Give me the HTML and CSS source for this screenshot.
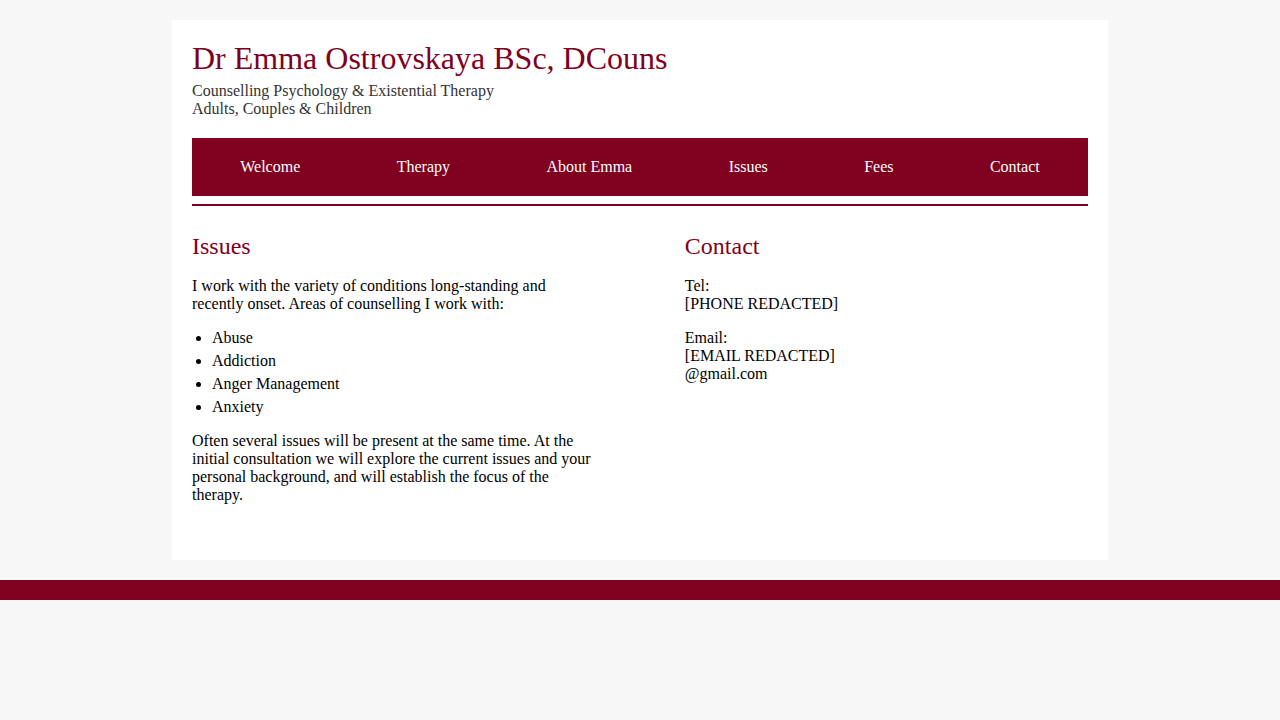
FILE: index.html
```html
<!DOCTYPE html>
<html lang="en">
<head>
<meta charset="utf-8">
<title>Dr Emma Ostrovskaya - Issues</title>
<link rel="stylesheet" href="styles.css">
</head>
<body>
<div class="page">
  <div class="container">
    <header class="site-header">
      <h1 class="site-title">Dr Emma Ostrovskaya BSc, DCouns</h1>
      <p class="tagline">Counselling Psychology &amp; Existential Therapy<br>Adults, Couples &amp; Children</p>
    </header>
    <nav class="main-nav">
      <ul class="nav-list">
        <li><a href="#">Welcome</a></li>
        <li><a href="#">Therapy</a></li>
        <li><a href="#">About Emma</a></li>
        <li><a href="#">Issues</a></li>
        <li><a href="#">Fees</a></li>
        <li><a href="#">Contact</a></li>
      </ul>
    </nav>
    <div class="rule"></div>
    <main class="content">
      <section class="column">
        <h2 class="section-title">Issues</h2>
        <p>I work with the variety of conditions long-standing and recently onset. Areas of counselling I work with:</p>
        <ul class="issue-list">
          <li>Abuse</li>
          <li>Addiction</li>
          <li>Anger Management</li>
          <li>Anxiety</li>
        </ul>
        <p>Often several issues will be present at the same time. At the initial consultation we will explore the current issues and your personal background, and will establish the focus of the therapy.</p>
      </section>
      <section class="column">
        <h2 class="section-title">Contact</h2>
        <p>Tel:<br>[PHONE REDACTED]</p>
        <p>Email:<br>[EMAIL REDACTED]<br>@gmail.com</p>
      </section>
    </main>
  </div>
</div>
<footer class="site-footer"></footer>
</body>
</html>
```
FILE: styles.css
```css
html, body {
  margin: 0;
  padding: 0;
}

body {
  background: #f7f7f7;
  font-family: "Liberation Serif", "Times New Roman", serif;
  font-size: 16px;
  color: #000;
}

.page {
  padding: 20px 0;
}

.container {
  width: 896px;
  margin: 0 auto;
  background: #fff;
  padding: 20px 20px 40px;
}

.site-title {
  margin: 0 0 5px;
  font-size: 32px;
  font-weight: normal;
  color: #800020;
  line-height: normal;
}

.tagline {
  margin: 0 0 20px;
  color: #333;
}

.main-nav {
  background: #800020;
}

.nav-list {
  list-style: none;
  margin: 0;
  padding: 0;
  display: flex;
  justify-content: space-around;
}

.nav-list a {
  display: block;
  padding: 20px 0;
  color: #fff;
  text-decoration: none;
}

.rule {
  height: 2px;
  background: #800020;
  margin-top: 8px;
}

.content {
  display: flex;
  justify-content: space-between;
  padding-top: 27px;
}

.column {
  width: 45%;
}

.section-title {
  margin: 0 0 17px;
  font-size: 24px;
  font-weight: normal;
  color: #800020;
  line-height: normal;
}

.column p {
  margin: 0 0 16px;
}

.issue-list {
  margin: 0 0 16px;
  padding-left: 20px;
}

.issue-list li + li {
  margin-top: 5px;
}

.site-footer {
  height: 20px;
  background: #800020;
}
```
